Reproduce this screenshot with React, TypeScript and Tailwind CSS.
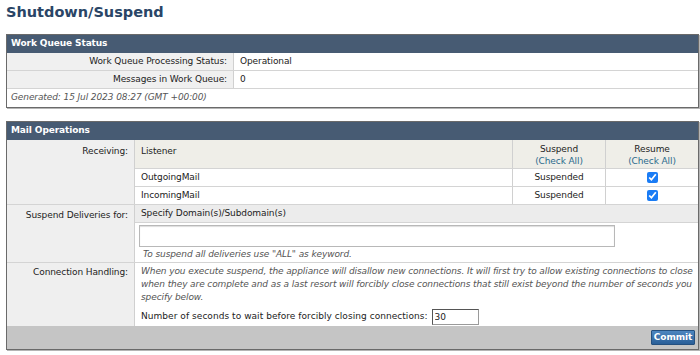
import { useState } from 'react';

const listeners = ['OutgoingMail', 'IncomingMail'];

export default function App() {
  const [seconds, setSeconds] = useState('30');

  return (
    <div className="min-h-[355px] w-[700px] bg-white font-['DejaVu_Sans',Verdana,sans-serif] text-[9px] tracking-[-0.1px] text-[#222]">
      <h1 className="pl-[6px] pt-[2px] text-[14.5px] font-bold leading-[20px] tracking-normal text-[#2a4566]">Shutdown/Suspend</h1>

      {/* === Work Queue Status === */}
      <div className="ml-[6px] mt-[12px] w-[693px] border border-[#6a6a6a] shadow-[1px_1px_0_#b5b5b5]">
        <div className="flex h-[18px] items-center bg-[#475b73] pl-[4px] font-bold text-white">Work Queue Status</div>
        <StatusRow label="Work Queue Processing Status:" value="Operational" />
        <StatusRow label="Messages in Work Queue:" value="0" />
        <div className="flex h-[18px] items-center pl-[4px] italic text-[#555]">Generated: 15 Jul 2023 08:27 (GMT +00:00)</div>
      </div>

      {/* === Mail Operations === */}
      <div className="ml-[6px] mt-[13px] w-[693px] border border-[#6a6a6a] shadow-[1px_1px_0_#b5b5b5]">
        <div className="flex h-[18px] items-center bg-[#475b73] pl-[4px] font-bold text-white">Mail Operations</div>

        {/* Receiving */}
        <div className="grid grid-cols-[128px_1fr] border-b border-[#d4d4d4]">
          <div className="border-r border-[#d0d0d0] bg-[#efefef] pr-[6px] pt-[5px] text-right">Receiving:</div>
          <div>
            <div className="grid h-[28px] grid-cols-[1fr_93px_93px] bg-[#efeee8]">
              <div className="pl-[6px] pt-[5px]">Listener</div>
              <div className="border-l border-[#d0d0d0] pt-[3px] text-center leading-[12px]">
                Suspend
                <br />
                <span className="text-[#2a6a8c]">(Check All)</span>
              </div>
              <div className="border-l border-[#d0d0d0] pt-[3px] text-center leading-[12px]">
                Resume
                <br />
                <span className="text-[#2a6a8c]">(Check All)</span>
              </div>
            </div>
            {listeners.map((name) => (
              <div key={name} className="grid h-[18px] grid-cols-[1fr_93px_93px] border-t border-[#d4d4d4] bg-white">
                <div className="flex items-center pl-[6px]">{name}</div>
                <div className="flex items-center justify-center border-l border-[#d0d0d0]">Suspended</div>
                <div className="flex items-center justify-center border-l border-[#d0d0d0]">
                  <input type="checkbox" defaultChecked className="m-0 h-[11px] w-[11px] accent-[#1a7cf5]" />
                </div>
              </div>
            ))}
          </div>
        </div>

        {/* Suspend deliveries */}
        <div className="grid grid-cols-[128px_1fr] border-b border-[#d4d4d4]">
          <div className="border-r border-[#d0d0d0] bg-[#efefef] pr-[6px] pt-[4px] text-right">Suspend Deliveries for:</div>
          <div>
            <div className="flex h-[18px] items-center border-b border-[#d4d4d4] bg-[#ececec] pl-[6px]">Specify Domain(s)/Subdomain(s)</div>
            <div className="px-[4px] pb-[2px] pt-[2px]">
              <textarea className="block h-[22px] w-[476px] resize-none border border-[#b8b8b8] bg-white shadow-[inset_0_1px_1px_#ddd] outline-none" />
              <div className="pl-[4px] pt-[1px] italic leading-[12px] text-[#555]">To suspend all deliveries use "ALL" as keyword.</div>
            </div>
          </div>
        </div>

        {/* Connection handling */}
        <div className="grid grid-cols-[128px_1fr]">
          <div className="border-r border-[#d0d0d0] bg-[#efefef] pr-[6px] pt-[3px] text-right">Connection Handling:</div>
          <div className="pb-[1px] pl-[6px] pr-[4px] pt-[2px]">
            <p className="italic leading-[13px] text-[#555]">
              When you execute suspend, the appliance will disallow new connections. It will first try to allow existing connections to close when they are complete and as a last resort will forcibly close connections that still exist beyond the number of seconds you specify below.
            </p>
            <div className="mt-[5px] flex items-center gap-[4px] tracking-[0.05px]">
              <span>Number of seconds to wait before forcibly closing connections:</span>
              <input
                value={seconds}
                onChange={(e) => setSeconds(e.target.value)}
                className="h-[16px] w-[47px] border border-[#9a9a9a] border-t-[#555] border-l-[#555] px-[2px] text-[9px] outline-none"
              />
            </div>
          </div>
        </div>

        {/* footer */}
        <div className="flex h-[23px] items-center justify-end bg-[#c5c5c5] pr-[3px]">
          <button className="h-[15px] w-[44px] rounded-[1px] border border-[#25507f] bg-gradient-to-b from-[#4d86c0] to-[#2a5f98] text-[9px] font-bold leading-[13px] text-white">
            Commit
          </button>
        </div>
      </div>
    </div>
  );
}

function StatusRow({ label, value }: { label: string; value: string }) {
  return (
    <div className="grid h-[18px] grid-cols-[227px_1fr] border-b border-[#d4d4d4]">
      <div className="flex items-center justify-end border-r border-[#d0d0d0] bg-[#f0f0f0] pr-[6px]">{label}</div>
      <div className="flex items-center pl-[6px]">{value}</div>
    </div>
  );
}
